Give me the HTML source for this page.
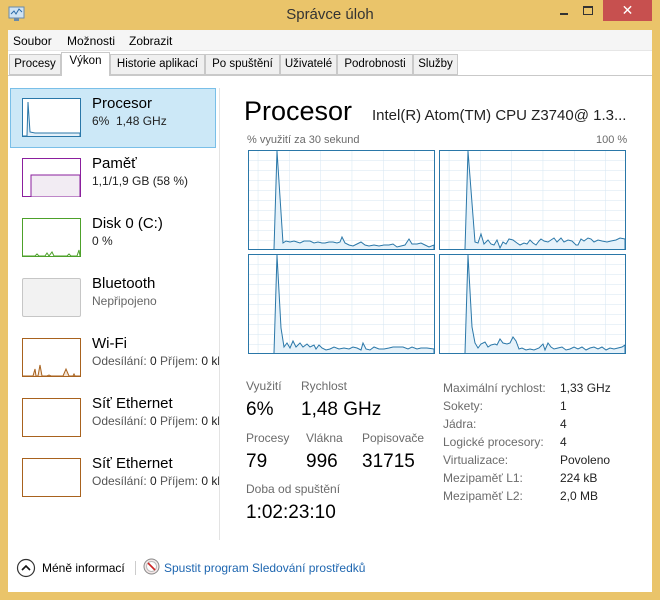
<!DOCTYPE html>
<html><head><meta charset="utf-8"><style>
*{margin:0;padding:0;box-sizing:border-box}
body{width:660px;height:600px;background:#EAC46A;font-family:"Liberation Sans",sans-serif;position:relative;overflow:hidden;color:#000}
.a{position:absolute;white-space:nowrap}
.tab{position:absolute;top:54px;height:21px;border:1px solid #C9C9C9;background:#F0F0F0;font-size:11.5px;line-height:19px;text-align:center}
.th{position:absolute;left:22px;width:59px;height:39px;background:#fff}
.t1{position:absolute;left:92px;font-size:15px}
.t2{position:absolute;left:92px;font-size:12px;color:#555;width:127px;overflow:hidden;white-space:nowrap}
.g{position:absolute;width:187px;height:100px;border:1px solid #2A77A8;background:#fff}
.lb{font-size:12px;color:#6b6b6b}
.vl{font-size:19px}
</style></head><body>
<div class="a" style="left:0;top:0;width:660px;height:30px;background:#EAC46A"></div>
<svg class="a" style="left:8px;top:6px" width="18" height="16"><rect x="1" y="1" width="15" height="11" fill="#cfe3f3" stroke="#6a8aa8"/><polyline points="3,8 6,5 8,8 11,3 14,6" fill="none" stroke="#2a6aa8"/><rect x="6" y="12" width="5" height="3" fill="#6a8aa8"/></svg>
<div class="a" style="left:0;width:660px;top:6px;text-align:center;font-size:15px;color:#333">Správce úloh</div>
<div class="a" style="left:560px;top:13px;width:8px;height:2px;background:#333"></div>
<div class="a" style="left:583px;top:6px;width:10px;height:9px;border:1px solid #333;border-top-width:2px"></div>
<div class="a" style="left:603px;top:0;width:49px;height:21px;background:#C7504F;color:#fff;font-size:14px;text-align:center;line-height:20px">✕</div>
<div class="a" style="left:8px;top:30px;width:644px;height:562px;background:#fff"></div>
<div class="a" style="left:8px;top:30px;width:644px;height:21px;background:#F5F5F5;border-bottom:1px solid #E6E6E6"></div>
<div class="a" style="left:13px;top:34px;font-size:12px">Soubor</div>
<div class="a" style="left:67px;top:34px;font-size:12px">Možnosti</div>
<div class="a" style="left:129px;top:34px;font-size:12px">Zobrazit</div>
<div class="a" style="left:8px;top:51px;width:644px;height:24px;background:#fff"></div>
<div class="a" style="left:8px;top:75px;width:644px;height:1px;background:#C9C9C9"></div>
<div class="tab" style="left:9px;width:52px">Procesy</div>
<div class="tab" style="left:61px;width:49px;top:52px;height:24px;background:#fff;border-bottom:none;line-height:17px">Výkon</div>
<div class="tab" style="left:110px;width:95px">Historie aplikací</div>
<div class="tab" style="left:205px;width:75px">Po spuštění</div>
<div class="tab" style="left:280px;width:57px">Uživatelé</div>
<div class="tab" style="left:337px;width:76px">Podrobnosti</div>
<div class="tab" style="left:413px;width:45px">Služby</div>
<!-- left panel -->
<div class="a" style="left:10px;top:88px;width:206px;height:60px;background:#CCE8F7;border:1px solid #79BFE8"></div>
<div class="th" style="top:98px;border:1px solid #2A77A8"><svg width="57" height="37"><polyline points="0,37 4,37 5,3 7,33 12,34 57,34 57,37" fill="#e4f0f9" stroke="#2A77A8"/></svg></div>
<div class="t1" style="top:95px">Procesor</div><div class="t2" style="top:114px;color:#222">6%&nbsp; 1,48 GHz</div>
<div class="th" style="top:158px;border:1px solid #8B1F9E"><svg width="57" height="38"><path d="M8,38 V16 H57 V38Z" fill="#f2ecf3" stroke="#8B1F9E"/></svg></div>
<div class="t1" style="top:155px">Paměť</div><div class="t2" style="top:174px;color:#222">1,1/1,9 GB (58 %)</div>
<div class="th" style="top:218px;border:1px solid #4DA12A"><svg width="57" height="38"><polyline points="0,37 12,37 14,35 16,37 22,37 24,34 26,37 29,33 31,37 44,37 46,35 48,37 54,37 56,31 57,37" fill="none" stroke="#4DA12A"/></svg></div>
<div class="t1" style="top:215px">Disk 0 (C:)</div><div class="t2" style="top:234px;color:#222">0 %</div>
<div class="th" style="top:278px;border:1px solid #C6C6C6;background:#F2F2F2;border-radius:2px"></div>
<div class="t1" style="top:275px">Bluetooth</div><div class="t2" style="top:294px;color:#666">Nepřipojeno</div>
<div class="th" style="top:338px;border:1px solid #A8621E"><svg width="57" height="38"><polyline points="0,37 10,37 12,30 13,37 15,37 17,26 19,37 24,37 26,36 28,37 40,37 43,30 46,37 50,37 51,35 52,37 57,37" fill="#f5e4d4" stroke="#A8621E"/></svg></div>
<div class="t1" style="top:335px">Wi-Fi</div><div class="t2" style="top:354px">Odesílání: <span style="color:#222">0</span> Příjem: <span style="color:#222">0 kb</span></div>
<div class="th" style="top:398px;border:1px solid #A8621E"></div>
<div class="t1" style="top:395px">Síť Ethernet</div><div class="t2" style="top:414px">Odesílání: <span style="color:#222">0</span> Příjem: <span style="color:#222">0 kb</span></div>
<div class="th" style="top:458px;border:1px solid #A8621E"></div>
<div class="t1" style="top:455px">Síť Ethernet</div><div class="t2" style="top:474px">Odesílání: <span style="color:#222">0</span> Příjem: <span style="color:#222">0 kb</span></div>
<div class="a" style="left:219px;top:88px;width:1px;height:452px;background:#E3E3E3"></div>
<!-- right -->
<div class="a" style="left:244px;top:96px;font-size:27px">Procesor</div>
<div class="a" style="left:372px;top:107px;font-size:15px;color:#222">Intel(R) Atom(TM) CPU Z3740@ 1.3...</div>
<div class="a" style="left:247px;top:134px;font-size:11px;color:#6b6b6b">% využití za 30 sekund</div>
<div class="a" style="left:596px;top:134px;font-size:11px;color:#6b6b6b">100 %</div>
<svg width="0" height="0" style="position:absolute"><defs><pattern id="gr" width="31.3" height="10" patternUnits="userSpaceOnUse" x="-22" y="0"><path d="M31.3,0 V10 M0,10 H31.3" stroke="#D5E6F2" fill="none"/></pattern></defs></svg>
<div class="g" style="left:248px;top:150px"><svg width="185" height="98"><rect width="185" height="98" fill="url(#gr)"/><polyline points="25,98 28,0 34,92 37,90 41,91 45,90 48,91 51,92 55,90 61,90 65,92 69,91 73,92 76,92 80,91 84,91 88,92 91,91 93,86 96,92 100,94 104,95 108,93 112,91 116,94 120,95 125,94 130,95 135,94 140,94 144,93 148,96 152,95 156,94 160,88 163,93 168,93 172,92 176,94 180,96 185,94 185,98" fill="#E6F2FA" stroke="#2A77A8"/></svg></div>
<div class="g" style="left:439px;top:150px"><svg width="185" height="98"><rect width="185" height="98" fill="url(#gr)"/><polyline points="25,98 28,0 35,91 38,92 41,83 44,93 48,89 51,93 54,94 57,89 60,97 63,91 66,93 69,88 73,89 77,92 80,94 84,92 87,93 90,89 93,92 96,94 99,90 101,88 104,90 108,91 111,89 114,87 117,91 121,87 124,91 128,89 132,90 136,94 138,94 141,88 144,90 148,87 151,88 154,91 158,89 162,90 167,91 171,90 176,89 180,87 185,88 185,98" fill="#E6F2FA" stroke="#2A77A8"/></svg></div>
<div class="g" style="left:248px;top:254px"><svg width="185" height="98"><rect width="185" height="98" fill="url(#gr)"/><polyline points="25,98 28,0 32,73 35,92 38,88 41,93 44,86 47,92 51,88 54,92 58,89 61,92 65,90 67,94 70,90 73,93 77,95 81,94 85,92 90,94 95,93 100,94 104,92 108,93 112,95 114,88 117,94 121,95 125,92 130,94 135,94 140,93 144,92 149,92 154,92 159,94 163,92 168,94 172,93 178,93 185,94 185,98" fill="#E6F2FA" stroke="#2A77A8"/></svg></div>
<div class="g" style="left:439px;top:254px"><svg width="185" height="98"><rect width="185" height="98" fill="url(#gr)"/><polyline points="25,98 28,0 32,72 35,88 38,93 41,89 45,87 48,92 51,90 55,89 57,90 60,84 63,88 67,89 70,88 73,82 76,86 79,94 82,93 86,95 90,94 94,95 99,93 103,89 105,95 108,88 111,92 114,94 118,93 122,92 126,95 130,94 134,92 138,94 142,92 146,95 150,93 154,92 158,94 162,92 166,95 170,93 174,94 178,93 182,92 185,90 185,98" fill="#E6F2FA" stroke="#2A77A8"/></svg></div>
<div class="a lb" style="left:246px;top:379px">Využití</div><div class="a lb" style="left:301px;top:379px">Rychlost</div>
<div class="a vl" style="left:246px;top:399px">6%</div><div class="a vl" style="left:301px;top:399px">1,48 GHz</div>
<div class="a lb" style="left:246px;top:431px">Procesy</div><div class="a lb" style="left:306px;top:431px">Vlákna</div><div class="a lb" style="left:362px;top:431px">Popisovače</div>
<div class="a vl" style="left:246px;top:451px">79</div><div class="a vl" style="left:306px;top:451px">996</div><div class="a vl" style="left:362px;top:451px">31715</div>
<div class="a lb" style="left:246px;top:482px">Doba od spuštění</div>
<div class="a vl" style="left:246px;top:502px">1:02:23:10</div>
<div class="a lb" style="left:443px;top:379px;line-height:18px">Maximální rychlost:<br>Sokety:<br>Jádra:<br>Logické procesory:<br>Virtualizace:<br>Mezipaměť L1:<br>Mezipaměť L2:</div>
<div class="a" style="left:560px;top:379px;line-height:18px;font-size:12px;color:#222">1,33 GHz<br>1<br>4<br>4<br>Povoleno<br>224 kB<br>2,0 MB</div>
<!-- footer -->
<svg class="a" style="left:16px;top:558px" width="20" height="20"><circle cx="10" cy="10" r="8.5" fill="none" stroke="#333" stroke-width="1.2"/><polyline points="6,12 10,8 14,12" fill="none" stroke="#111" stroke-width="1.6"/></svg>
<div class="a" style="left:42px;top:561px;font-size:12px">Méně informací</div>
<div class="a" style="left:135px;top:561px;width:1px;height:14px;background:#ccc"></div>
<svg class="a" style="left:143px;top:558px" width="17" height="17"><circle cx="8.5" cy="8.5" r="7.5" fill="#f4e8e8" stroke="#888"/><circle cx="8.5" cy="8.5" r="5" fill="#fff" stroke="#bbb"/><line x1="5" y1="5" x2="12" y2="12" stroke="#C22" stroke-width="1.6"/></svg>
<div class="a" style="left:164px;top:561px;font-size:12px;color:#1E66B0">Spustit program Sledování prostředků</div>
</body></html>
